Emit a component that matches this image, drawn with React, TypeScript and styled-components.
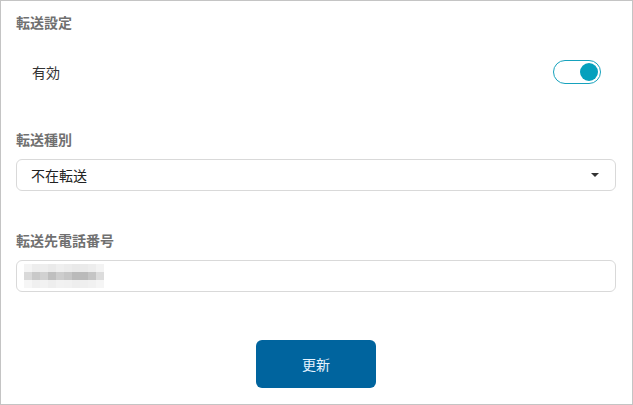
import React from 'react';
import styled, { createGlobalStyle } from 'styled-components';

const GlobalStyle = createGlobalStyle`
  html, body {
    margin: 0;
    padding: 0;
    background: #ffffff;
  }
  body {
    font-family: 'Noto Sans CJK JP', 'Noto Sans', sans-serif;
  }
`;

const Panel = styled.div`
  width: 633px;
  height: 405px;
  box-sizing: border-box;
  border: 1px solid #c4c4c4;
  padding: 11px 16px 0 15px;
  display: flex;
  flex-direction: column;
`;

const SectionTitle = styled.div<{ $gap: number }>`
  font-size: 14px;
  line-height: 20px;
  font-weight: 700;
  color: #707070;
  margin-top: ${p => p.$gap}px;
`;

const SwitchRow = styled.div`
  display: flex;
  align-items: center;
  justify-content: space-between;
  height: 26px;
  margin-top: 27px;
  padding: 0 15px 0 16px;
`;

const SwitchLabel = styled.span`
  font-size: 14px;
  color: #333333;
`;

const Toggle = styled.div<{ $on: boolean }>`
  width: 48px;
  height: 24px;
  box-sizing: border-box;
  border: 1.5px solid #16a2bd;
  border-radius: 12px;
  background: #ffffff;
  position: relative;

  &::after {
    content: '';
    position: absolute;
    top: 1.5px;
    left: ${p => (p.$on ? '25.5px' : '1.5px')};
    width: 18px;
    height: 18px;
    border-radius: 50%;
    background: #05a0bd;
  }
`;

const Field = styled.div<{ $gap: number }>`
  height: 32px;
  box-sizing: border-box;
  border: 1px solid #d9d9d9;
  border-radius: 6px;
  margin-top: ${p => p.$gap}px;
  display: flex;
  align-items: center;
  justify-content: space-between;
  padding: 0 16px 0 14px;
`;

const FieldText = styled.span`
  font-size: 14px;
  color: #222222;
`;

const Caret = styled.span`
  width: 0;
  height: 0;
  border-left: 4px solid transparent;
  border-right: 4px solid transparent;
  border-top: 4px solid #333333;
`;

const Mosaic = styled.div`
  display: grid;
  grid-template-columns: repeat(10, 8px);
  grid-auto-rows: 8px;
  margin-left: -7px;
`;

const Cell = styled.div``;

const ButtonRow = styled.div`
  display: flex;
  justify-content: center;
  margin-top: 48px;
`;

const UpdateButton = styled.button`
  width: 120px;
  height: 48px;
  border: none;
  border-radius: 6px;
  background: #00649e;
  color: #e6f3ff;
  font-family: 'Noto Sans CJK JP', 'Noto Sans', sans-serif;
  font-size: 14px;
  cursor: pointer;
`;

const mosaic = [
  ['#f4f4f4', '#ededed', '#eeeeee', '#eaeaea', '#efefef', '#ececec', '#e9e9e9', '#eaeaea', '#ededed', '#f3f3f3'],
  ['#d9d9d9', '#c9c9c9', '#d1d1d1', '#bfbfbf', '#cdcdcd', '#c6c6c6', '#bababa', '#bababa', '#c5c5c5', '#dcdcdc'],
  ['#f6f6f6', '#f0f0f0', '#f2f2f2', '#eeeeee', '#f2f2f2', '#f1f1f1', '#eeeeee', '#efefef', '#f1f1f1', '#f5f5f5'],
];

export default function App() {
  return (
    <>
      <GlobalStyle />
      <Panel>
        <SectionTitle $gap={0}>転送設定</SectionTitle>
        <SwitchRow>
          <SwitchLabel>有効</SwitchLabel>
          <Toggle $on />
        </SwitchRow>
        <SectionTitle $gap={44}>転送種別</SectionTitle>
        <Field $gap={10}>
          <FieldText>不在転送</FieldText>
          <Caret />
        </Field>
        <SectionTitle $gap={39}>転送先電話番号</SectionTitle>
        <Field $gap={10}>
          <Mosaic>
            {mosaic.flatMap((row, r) =>
              row.map((c, i) => <Cell key={`${r}-${i}`} style={{ background: c }} />)
            )}
          </Mosaic>
        </Field>
        <ButtonRow>
          <UpdateButton>更新</UpdateButton>
        </ButtonRow>
      </Panel>
    </>
  );
}
